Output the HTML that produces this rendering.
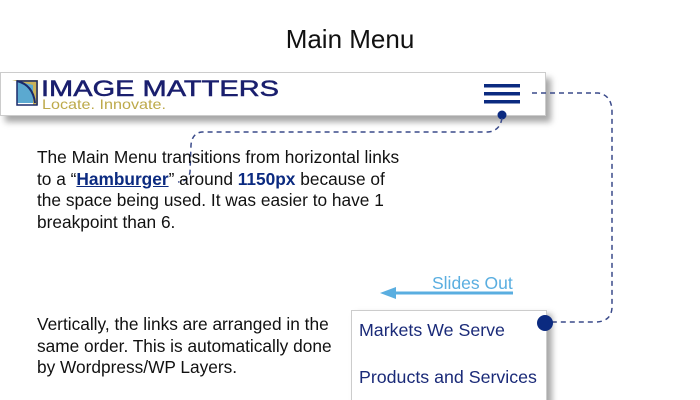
<!DOCTYPE html>
<html style="overflow:hidden;height:400px"><head><meta charset="utf-8"><style>
body{margin:0;width:700px;height:400px;background:#fff;position:relative;overflow:hidden;font-family:"Liberation Sans",sans-serif;}
.t{position:absolute;color:#111;font-size:17.3px;line-height:21.5px;}
</style></head><body>
<div style="position:absolute;left:0;width:700px;top:24px;text-align:center;font-size:26px;color:#111">Main Menu</div>
<div style="position:absolute;left:0;top:72px;width:544px;height:42px;border:1px solid #ccc;background:#fff;box-shadow:5px 6px 6px rgba(0,0,0,0.35)"></div>
<svg style="position:absolute;left:0;top:0" width="700" height="400">
<rect x="17" y="81" width="18" height="22" fill="#5ba9d0"/>
<path d="M12 80 L38 80 L38 105 L33 105 L33 85 L12 80Z" fill="#c9b25a"/>
<path d="M17 81 Q33 85 35 103" stroke="#1a2a6a" stroke-width="2" fill="none"/>
<rect x="17" y="81" width="20" height="24" fill="none" stroke="#1a2a6a" stroke-width="1.5"/>
<text x="41" y="96" font-family="Liberation Sans" font-size="22" fill="#1a1f6e" stroke="#1a1f6e" stroke-width="0.5" textLength="238" lengthAdjust="spacingAndGlyphs">IMAGE MATTERS</text>
<text x="42" y="109" font-family="Liberation Sans" font-size="14" fill="#bda94a" textLength="124" lengthAdjust="spacingAndGlyphs">Locate. Innovate.</text>
<rect x="484" y="84" width="36" height="3.5" fill="#0b2a80"/>
<rect x="484" y="92" width="36" height="3.5" fill="#0b2a80"/>
<rect x="484" y="100" width="36" height="3.5" fill="#0b2a80"/>
<circle cx="502" cy="115" r="4.5" fill="#0b2a80"/>
<path d="M502 118 Q500 131 488 132 L202 132 Q192 133 191 145 L190 172 Q189 181 178 182" stroke="#3a4a8a" stroke-width="1.5" stroke-dasharray="5,4" fill="none"/>
<path d="M532 93 L598 93 Q612 95 612 112 L612 308 Q611 322 595 322 L552 322" stroke="#3a4a8a" stroke-width="1.5" stroke-dasharray="5,4" fill="none"/>
<line x1="392" y1="293" x2="513" y2="293" stroke="#5aaee0" stroke-width="3"/>
<path d="M380 293 L396 287 L396 299Z" fill="#5aaee0"/>
<text x="432" y="289" font-family="Liberation Sans" font-size="17.5" fill="#5aaee0">Slides Out</text>
</svg>
<div style="position:absolute;left:351px;top:310px;width:194px;height:100px;border:1px solid #ccc;background:#fff;box-shadow:5px 4px 6px rgba(0,0,0,0.35)"></div>
<div style="position:absolute;left:359px;top:320px;font-size:17.8px;color:#1a2a78">Markets We Serve</div>
<div style="position:absolute;left:359px;top:367px;font-size:17.8px;color:#1a2a78">Products and Services</div>
<svg style="position:absolute;left:0;top:0" width="700" height="400"><circle cx="545" cy="323" r="8" fill="#0b2a80"/></svg>
<div class="t" style="left:37px;top:147px;width:372px">The Main Menu transitions from horizontal links to a “<b style="color:#0b2a80;text-decoration:underline">Hamburger</b>” around <b style="color:#0b2a80">1150px</b> because of the space being used. It was easier to have 1 breakpoint than 6.</div>
<div class="t" style="left:37px;top:314px;width:310px">Vertically, the links are arranged in the same order. This is automatically done by Wordpress/WP Layers.</div>
</body></html>
